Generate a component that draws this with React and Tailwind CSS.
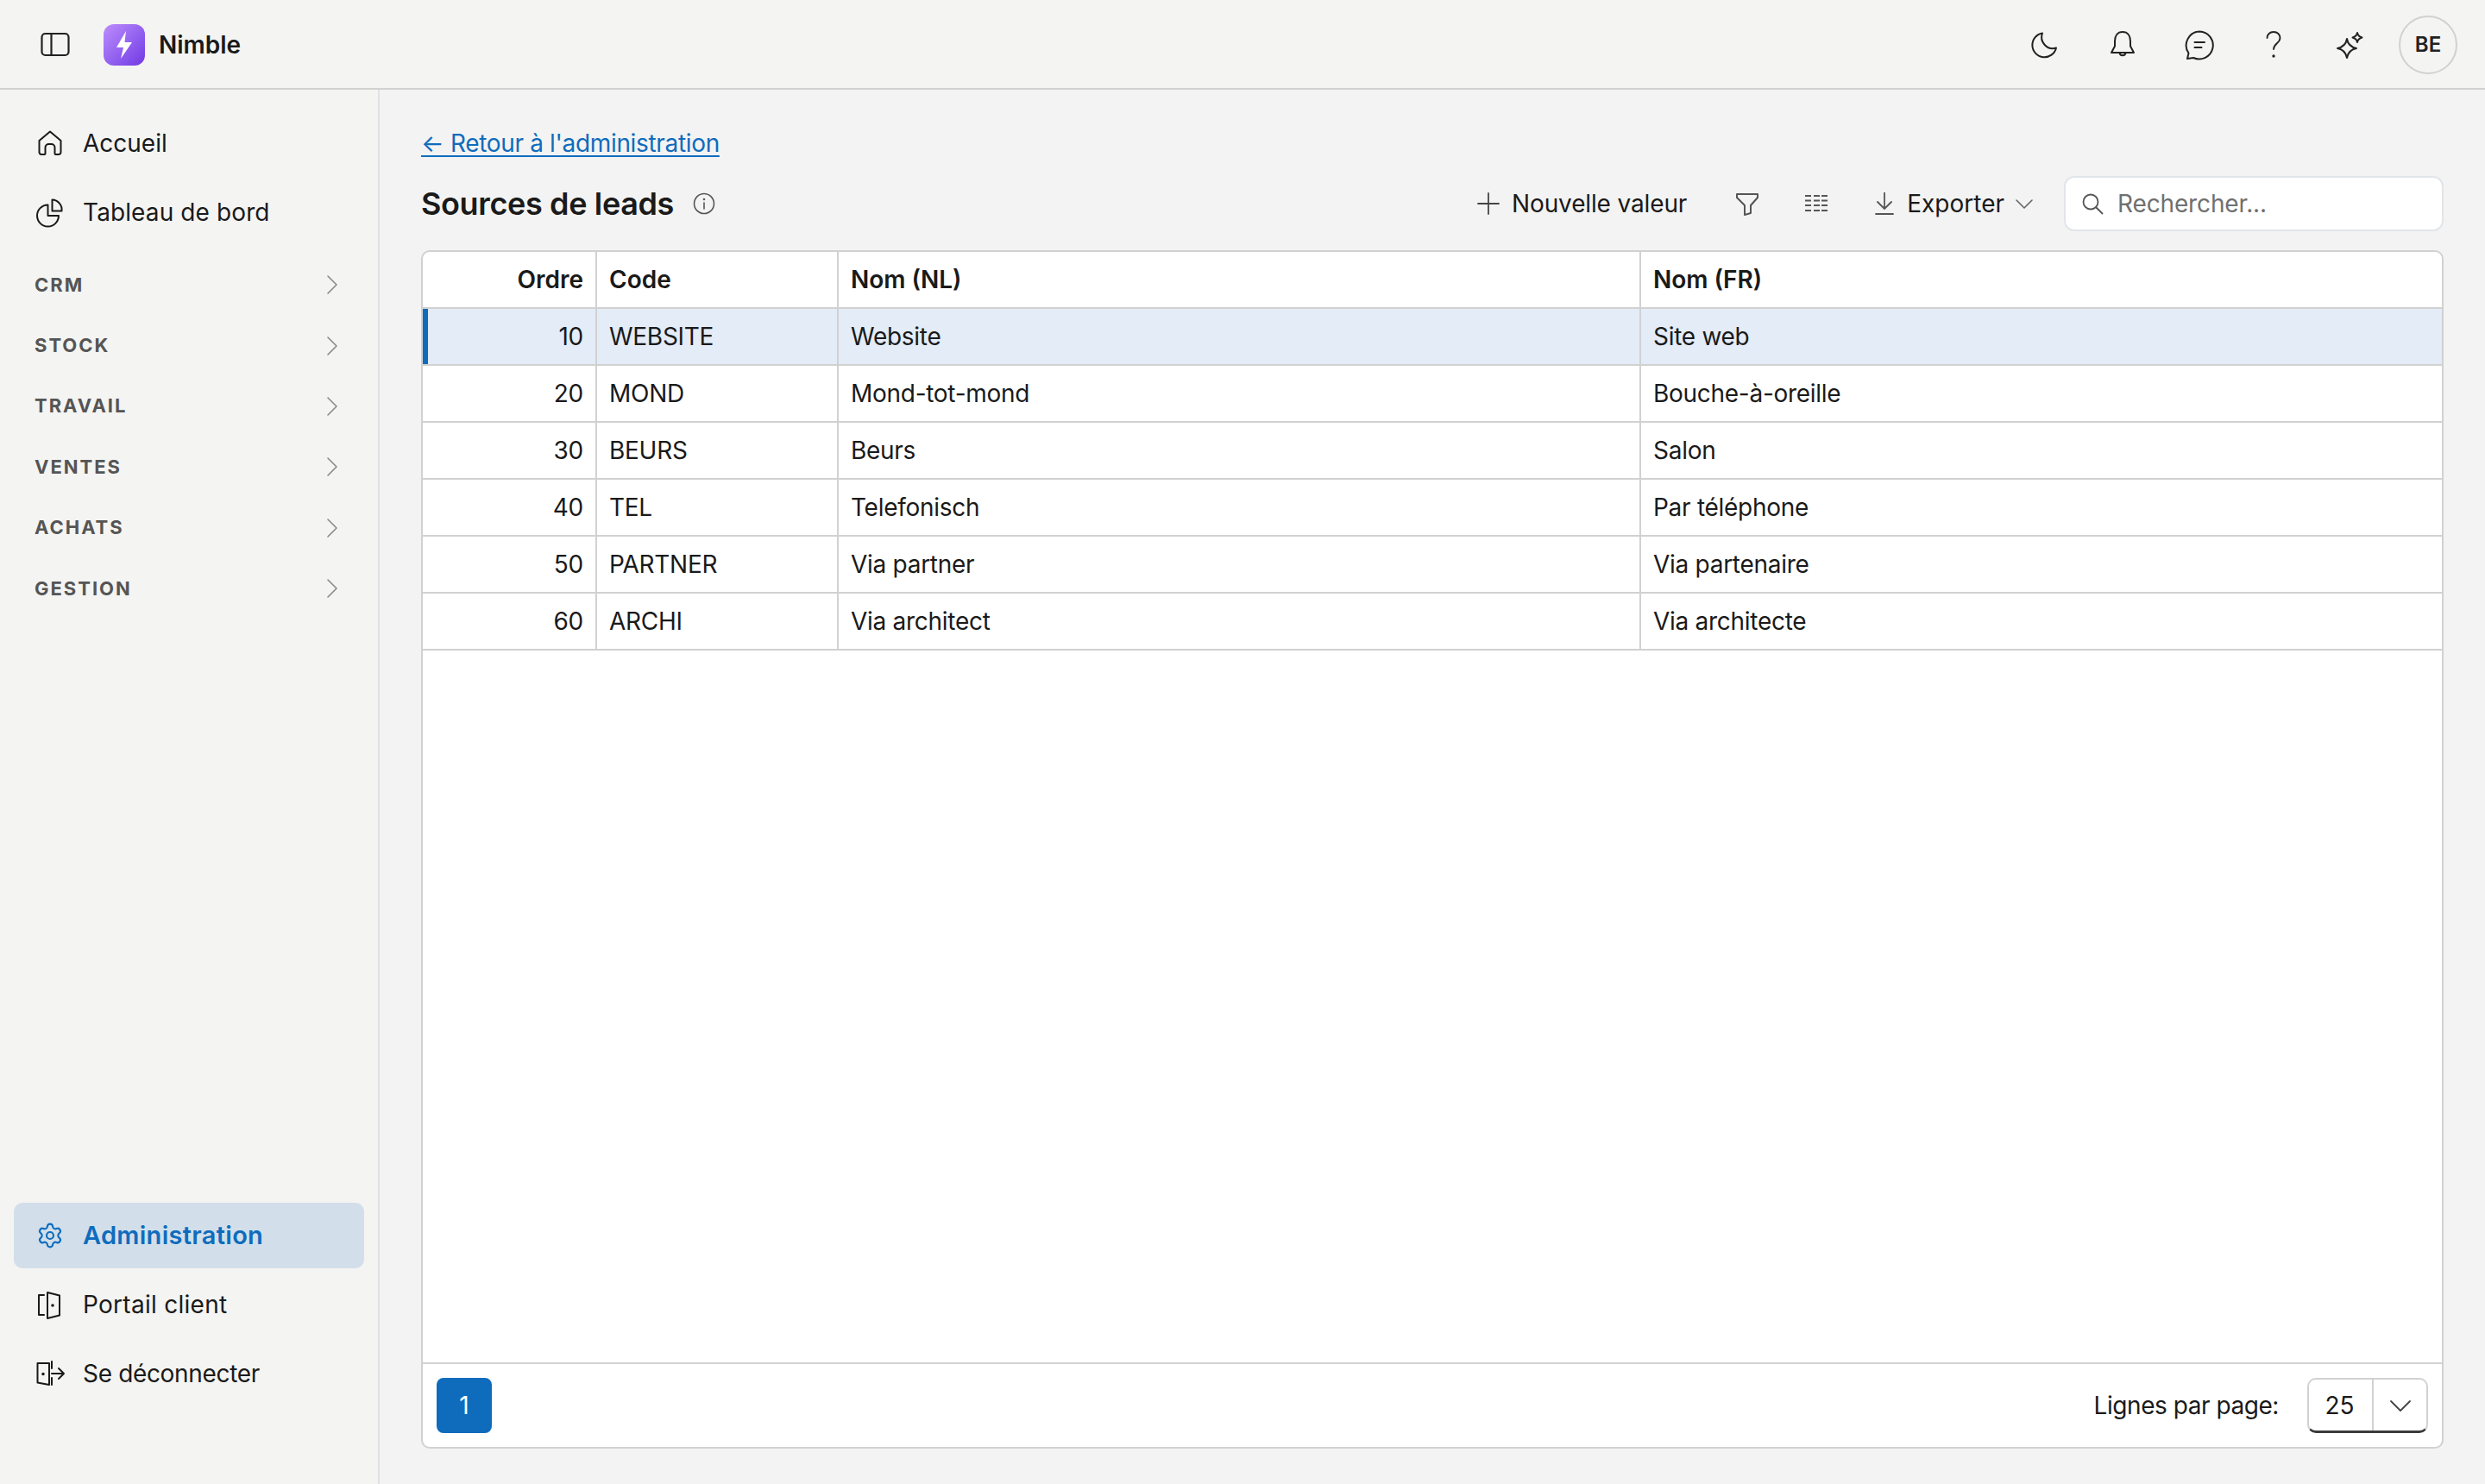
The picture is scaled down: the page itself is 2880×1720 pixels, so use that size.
import React from "react";
import { Settings } from "lucide-react";

const Ic = ({ size = 36, w = 2, className = "", children }) => (
  <svg width={size} height={size} viewBox={`0 0 ${size} ${size}`} fill="none" stroke="currentColor" strokeWidth={w} strokeLinecap="round" strokeLinejoin="round" className={`shrink-0 ${className}`}>
    {children}
  </svg>
);

const Chevron = () => (
  <Ic size={24} w={1.6} className="text-[#8a8a8a]"><path d="M8 2l10 10-10 10" /></Ic>
);

const NavItem = ({ icon, label, active, textClass = "" }) => (
  <div className={`flex h-[76px] items-center gap-[20px] rounded-[10px] pl-[24px] text-[28px] ${active ? "bg-[#d2dfea] font-semibold text-[#0f6cbd]" : "text-[#1a1a1a]"}`}>
    {icon}
    <span className={textClass}>{label}</span>
  </div>
);

const Section = ({ label }) => (
  <div className="flex h-[70.4px] items-center justify-between pl-[24px] pr-[26px] text-[22px] font-bold tracking-[0.09em] text-[#555555]">
    <span>{label}</span>
    <Chevron />
  </div>
);

const rows = [
  ["10", "WEBSITE", "Website", "Site web"],
  ["20", "MOND", "Mond-tot-mond", "Bouche-à-oreille"],
  ["30", "BEURS", "Beurs", "Salon"],
  ["40", "TEL", "Telefonisch", "Par téléphone"],
  ["50", "PARTNER", "Via partner", "Via partenaire"],
  ["60", "ARCHI", "Via architect", "Via architecte"],
];

const Row = ({ cells, head, selected }) => (
  <div className={`relative grid h-[66px] grid-cols-[202px_280px_930px_1fr] border-b-2 border-[#d1d1d1] ${selected ? "bg-[#e3ecf7]" : ""} ${head ? "font-semibold" : "tracking-[-0.01em]"}`}>
    {selected && <div className="absolute left-0 top-0 h-full w-[6px] bg-[#0f6cbd]" />}
    {cells.map((c, i) => (
      <div key={i} className={`flex items-center px-[14px] ${i === 0 ? "justify-end" : ""} ${i < 3 ? "border-r-2 border-[#d1d1d1]" : ""}`}>
        {c}
      </div>
    ))}
  </div>
);

export default function App() {
  return (
    <div className="flex h-[1720px] w-[2880px] flex-col overflow-hidden bg-[#f3f3f3] font-['Inter',sans-serif] text-[28px] text-[#1a1a1a]">
      <header className="flex h-[104px] shrink-0 items-center justify-between border-b-2 border-[#d1d1d1] bg-[#f4f4f2] pl-[47px] pr-[32px] pt-[2px]">
        <div className="flex items-center">
          <Ic size={34} w={2.2} className="text-[#222]">
            <rect x="1.500" y="4" width="31" height="25" rx="4" />
            <path d="M12.500 4v25" />
          </Ic>
          <div className="ml-[39px] flex h-[48px] w-[48px] items-center justify-center rounded-[12px] bg-gradient-to-br from-[#bd8cfc] to-[#7334e4]">
            <svg width="22" height="34" viewBox="0 0 22 34"><path d="M13 1 2 20h8L7 33 20 14h-8.500z" fill="#fff" /></svg>
          </div>
          <span className="ml-[16px] font-semibold">Nimble</span>
        </div>
        <div className="flex items-center text-[#222]">
          <div className="flex w-[90px] justify-center">
            <Ic size={34}><path d="M14 3.500A14 14 0 1 0 30 20.500 13 13 0 0 1 14 3.500Z" /></Ic>
          </div>
          <div className="flex w-[90px] justify-center">
            <Ic size={36}>
              <path d="M18 3c-6 0-9 4.500-9 10.500v6L5 27h26l-4-7.500v-6C27 7.500 24 3 18 3Z" />
              <path d="M14.500 27.500a3.600 3.600 0 0 0 7 0" />
            </Ic>
          </div>
          <div className="flex w-[87px] justify-center">
            <Ic size={36}>
              <path d="M18 2.500a16 16 0 1 1-7 30.500l-7 1 1.500-6.500A16 16 0 0 1 18 2.500Z" />
              <path d="M12.500 15H24M12.500 21h8" />
            </Ic>
          </div>
          <div className="flex w-[86px] justify-center">
            <Ic size={36} w={1.8}>
              <path d="M10.500 10c0-4 3-7 7.500-7s7.500 3 7.500 7c0 6-7.500 6.500-7.500 13" />
              <circle cx="18" cy="31" r="0.8" fill="currentColor" />
            </Ic>
          </div>
          <div className="flex w-[84px] justify-center">
            <Ic size={40}>
              <path d="M20 13Q21.500 22 31 24 21.500 26 20 35 18.500 26 9 24 18.500 22 20 13Z" />
              <path d="M32 6Q32.800 10.200 37.500 11.500 32.800 12.800 32 17 31.200 12.800 26.500 11.500 31.200 10.200 32 6Z" />
            </Ic>
          </div>
          <div className="ml-[18px] flex h-[68px] w-[68px] items-center justify-center rounded-full border-2 border-[#d1d1d1] text-[24px] font-semibold">BE</div>
        </div>
      </header>

      <div className="flex min-h-0 flex-1">
        <aside className="flex w-[440px] shrink-0 flex-col justify-between border-r-2 border-[#dfe2e4] bg-[#f4f4f2] px-[16px] pb-[90px] pt-[24px]">
          <div>
            <div className="flex flex-col gap-[4px]">
              <NavItem label="Accueil" icon={
                <Ic><path d="M18 4.500 30.500 15v13.500a2.500 2.500 0 0 1-2.500 2.500h-3.500a1 1 0 0 1-1-1v-7a4 4 0 0 0-4-4h-3a4 4 0 0 0-4 4v7a1 1 0 0 1-1 1H8a2.500 2.500 0 0 1-2.500-2.500V15Z" /></Ic>
              } />
              <NavItem label="Tableau de bord" textClass="tracking-[0.004em]" icon={
                <Ic>
                  <path d="M15.500 9.500a12.500 12.500 0 1 0 12.500 12.500h-12.500Z" />
                  <path d="M20.500 3.500a11.500 11.500 0 0 1 11 13h-11Z" />
                </Ic>
              } />
            </div>
            <div className="mt-[11px]">
              {["CRM", "STOCK", "TRAVAIL", "VENTES", "ACHATS", "GESTION"].map((s) => (
                <Section key={s} label={s} />
              ))}
            </div>
          </div>
          <div className="flex flex-col gap-[4px]">
            <NavItem active label="Administration" textClass="text-[29px] tracking-[0.01em]" icon={
              <span className="flex w-[36px] justify-center"><Settings size={32} strokeWidth={1.6} /></span>
            } />
            <NavItem label="Portail client" textClass="tracking-[0.01em]" icon={
              <Ic>
                <path d="M11 7H5v23h6" />
                <path d="M15 4l14 3.500v23L15 34Z" />
                <circle cx="21" cy="19" r="0.8" fill="currentColor" />
              </Ic>
            } />
            <NavItem label="Se déconnecter" textClass="tracking-[-0.012em]" icon={
              <Ic>
                <path d="M17 6H3.500v22.500L17 31V6Z" />
                <circle cx="10" cy="18.500" r="0.8" fill="currentColor" />
                <path d="M20 4v8M20 23v8M20 18h13.500M28 12l6 6-6 6" />
              </Ic>
            } />
          </div>
        </aside>

        <main className="flex min-w-0 flex-1 flex-col pb-[41px] pl-[48px] pr-[48px] pt-[41px]">
          <a className="w-fit tracking-[-0.012em] text-[#0f6cbd] underline decoration-2 underline-offset-[4px]">← Retour à l'administration</a>
          <div className="mt-[17px] flex h-[64px] items-center justify-between">
            <div className="flex items-center gap-[22px]">
              <h1 className="text-[36px] font-semibold tracking-[-0.01em]">Sources de leads</h1>
              <Ic size={26} w={1.6} className="text-[#555]">
                <circle cx="13" cy="13" r="11.500" />
                <path d="M13 12v7" />
                <circle cx="13" cy="8" r="0.5" fill="currentColor" />
              </Ic>
            </div>
            <div className="flex items-center">
              <div className="flex items-center gap-[14px]">
                <Ic size={26} w={1.8} className="text-[#444]"><path d="M13 1v24M1 13h24" /></Ic>
                <span className="tracking-[-0.005em]">Nouvelle valeur</span>
              </div>
              <Ic size={28} w={2} className="ml-[56px] text-[#555]">
                <path d="M2 3h24v4l-8 9v9l-7 2V16L2 7Z" />
              </Ic>
              <Ic size={28} w={2} className="ml-[52px] text-[#555]">
                <path d="M1 5h7M11 5h7M20 5h7M1 10.500h7M11 10.500h7M20 10.500h7M1 16h7M11 16h7M20 16h7M1 22h7M11 22h7M20 22h7" strokeLinecap="butt" />
              </Ic>
              <Ic size={26} w={1.8} className="ml-[52px] text-[#555]">
                <path d="M13 0v19M5 11l8 8 8-8M3 25h20" />
              </Ic>
              <span className="ml-[13px]">Exporter</span>
              <Ic size={22} w={1.6} className="ml-[12px] text-[#666]"><path d="M2 7l9 9 9-9" /></Ic>
              <div className="ml-[35px] flex h-[64px] w-[440px] items-center rounded-[12px] border-2 border-[#e1e5ea] bg-white pl-[18px] text-[#707070]">
                <Ic size={26} w={1.8} className="text-[#555]">
                  <circle cx="11" cy="11" r="8.500" />
                  <path d="M17.500 17.500l7 7" />
                </Ic>
                <span className="ml-[16px] tracking-[-0.005em]">Rechercher...</span>
              </div>
            </div>
          </div>

          <div className="mt-[22px] flex min-h-0 flex-1 flex-col overflow-hidden rounded-[10px] border-2 border-[#d1d1d1] bg-white">
            <div className="flex-1">
              <Row head cells={["Ordre", "Code", "Nom (NL)", "Nom (FR)"]} />
              {rows.map((r, i) => (
                <Row key={r[0]} cells={r} selected={i === 0} />
              ))}
            </div>
            <div className="flex h-[98px] shrink-0 items-center justify-between border-t-2 border-[#d1d1d1] pl-[16px] pr-[16px]">
              <div className="flex h-[64px] w-[64px] items-center justify-center rounded-[8px] bg-[#0f6cbd] text-white">1</div>
              <div className="flex items-center">
                <span className="tracking-[-0.016em]">Lignes par page:</span>
                <div className="ml-[33px] flex h-[64px] w-[140px] rounded-[10px] border-2 border-b-[3px] border-[#d1d1d1] border-b-[#3a3a3a]">
                  <div className="flex w-[75px] items-center justify-center border-r-2 border-[#d1d1d1] pr-[2px]">25</div>
                  <div className="flex flex-1 items-center justify-center text-[#444]">
                    <Ic size={26} w={1.8}><path d="M2 8l11 11L24 8" /></Ic>
                  </div>
                </div>
              </div>
            </div>
          </div>
        </main>
      </div>
    </div>
  );
}
